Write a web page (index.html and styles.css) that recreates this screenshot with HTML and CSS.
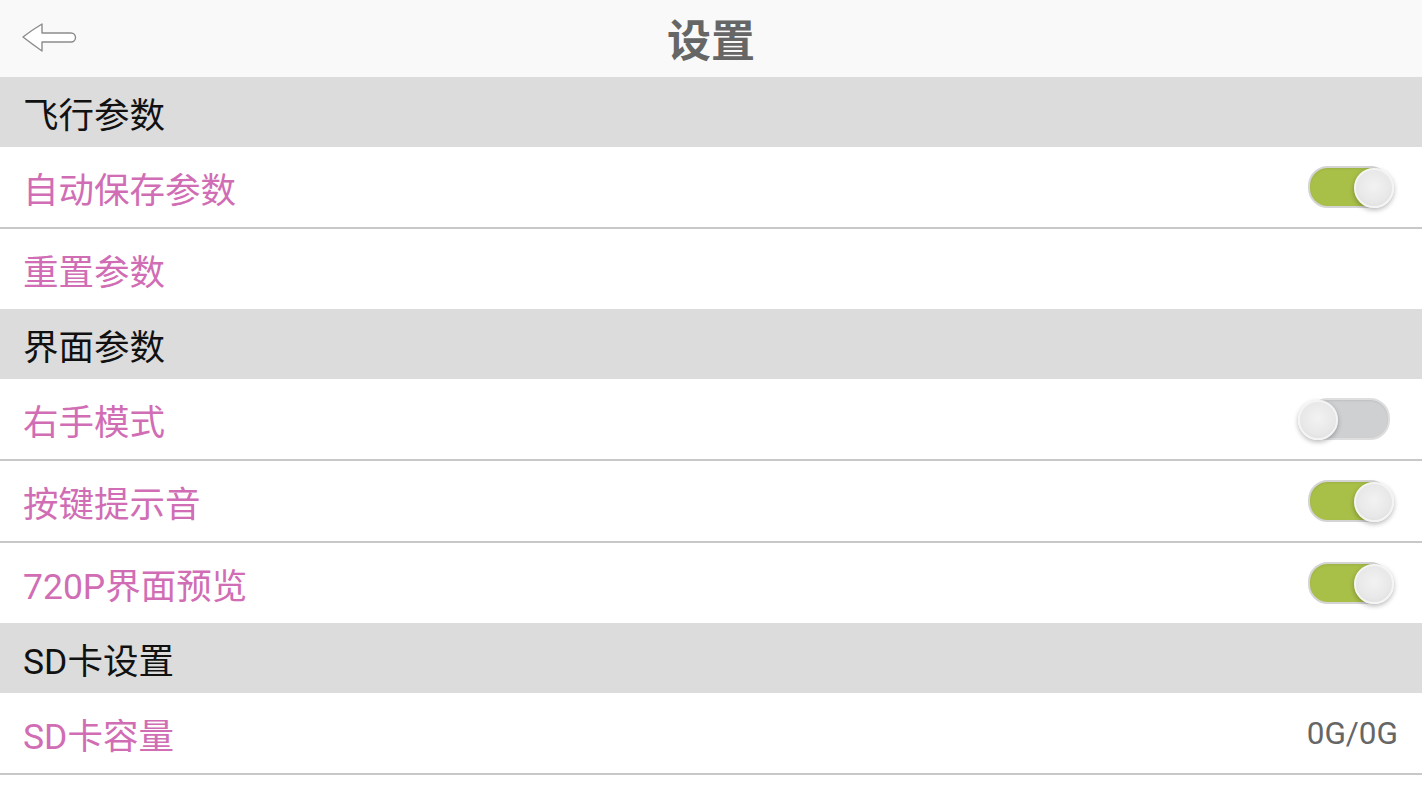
FILE: index.html
```html
<!DOCTYPE html>
<html lang="zh-CN">
<head>
<meta charset="utf-8">
<title>设置</title>
<link rel="stylesheet" href="styles.css">
</head>
<body>
<div class="page">
  <header class="topbar">
    <button class="back" aria-label="返回">
      <svg width="60" height="32" viewBox="0 0 60 32">
        <path d="M3,15 Q12,8 22,2 L22,11 L51,11 A4.5,4.5 0 0 1 51,20 L22,20 L22,29 Q12,22 3,15 Z" fill="#ffffff" stroke="#8c8c8c" stroke-width="1.4" stroke-linejoin="round"/>
      </svg>
    </button>
    <h1 class="title">设置</h1>
  </header>

  <div class="section">飞行参数</div>
  <div class="row lined"><span class="label">自动保存参数</span><span class="switch on"><span class="knob"></span></span></div>
  <div class="row"><span class="label">重置参数</span></div>

  <div class="section">界面参数</div>
  <div class="row lined"><span class="label">右手模式</span><span class="switch"><span class="knob"></span></span></div>
  <div class="row lined"><span class="label">按键提示音</span><span class="switch on"><span class="knob"></span></span></div>
  <div class="row"><span class="label">720P界面预览</span><span class="switch on"><span class="knob"></span></span></div>

  <div class="section">SD卡设置</div>
  <div class="row lined"><span class="label">SD卡容量</span><span class="value">0G/0G</span></div>
  <div class="row"><span class="label">SD卡格式化</span></div>
</div>
</body>
</html>
```

FILE: styles.css
```css
html, body {
  margin: 0;
  padding: 0;
  background: #ffffff;
}
body {
  width: 1422px;
  height: 800px;
  overflow: hidden;
  font-family: Roboto, "Noto Sans CJK SC", sans-serif;
}
.page {
  display: flex;
  flex-direction: column;
}
.topbar {
  height: 77px;
  flex: none;
  background: #f9f9f9;
  display: flex;
  align-items: center;
  justify-content: center;
  position: relative;
}
.back {
  position: absolute;
  left: 20px;
  top: 22px;
  padding: 0;
  margin: 0;
  border: none;
  background: transparent;
  width: 60px;
  height: 32px;
  display: block;
}
.back svg { display: block; }
.title {
  margin: 0;
  font-size: 44px;
  font-weight: 700;
  color: #666666;
  line-height: 1;
  font-family: "Noto Sans CJK SC", sans-serif;
  padding-bottom: 2px;
}
.section {
  height: 70px;
  flex: none;
  background: #dcdcdc;
  color: #111111;
  font-size: 35.5px;
  display: flex;
  align-items: center;
  padding-left: 23px;
  box-sizing: border-box;
}
.row {
  height: 80px;
  flex: none;
  display: flex;
  align-items: center;
  justify-content: space-between;
  padding: 0 24px 0 23px;
  box-sizing: content-box;
  background: #ffffff;
}
.row.lined {
  border-bottom: 2px solid #c8c8c8;
}
.label {
  color: #d06db4;
  font-size: 35.5px;
}
.value {
  color: #666666;
  font-size: 31.5px;
}
.switch {
  width: 78px;
  height: 38px;
  border-radius: 20px;
  background: #cfd0d2;
  border: 2px solid #dedede;
  position: relative;
  margin-right: 8px;
  box-shadow: inset 0 1px 2px rgba(0,0,0,0.08);
}
.switch.on {
  background: #a8bf48;
  border-color: #d4d4d4;
}
.knob {
  position: absolute;
  width: 36px;
  height: 36px;
  border-radius: 50%;
  top: 0;
  left: -12px;
  background: radial-gradient(circle at 50% 45%, #f2f2f2 0%, #e8e8e8 60%, #d6d6d6 100%);
  border: 2px solid #f4f4f4;
  box-shadow: 0 2px 5px rgba(0,0,0,0.28);
}
.switch.on .knob {
  left: auto;
  right: -6px;
}
```
